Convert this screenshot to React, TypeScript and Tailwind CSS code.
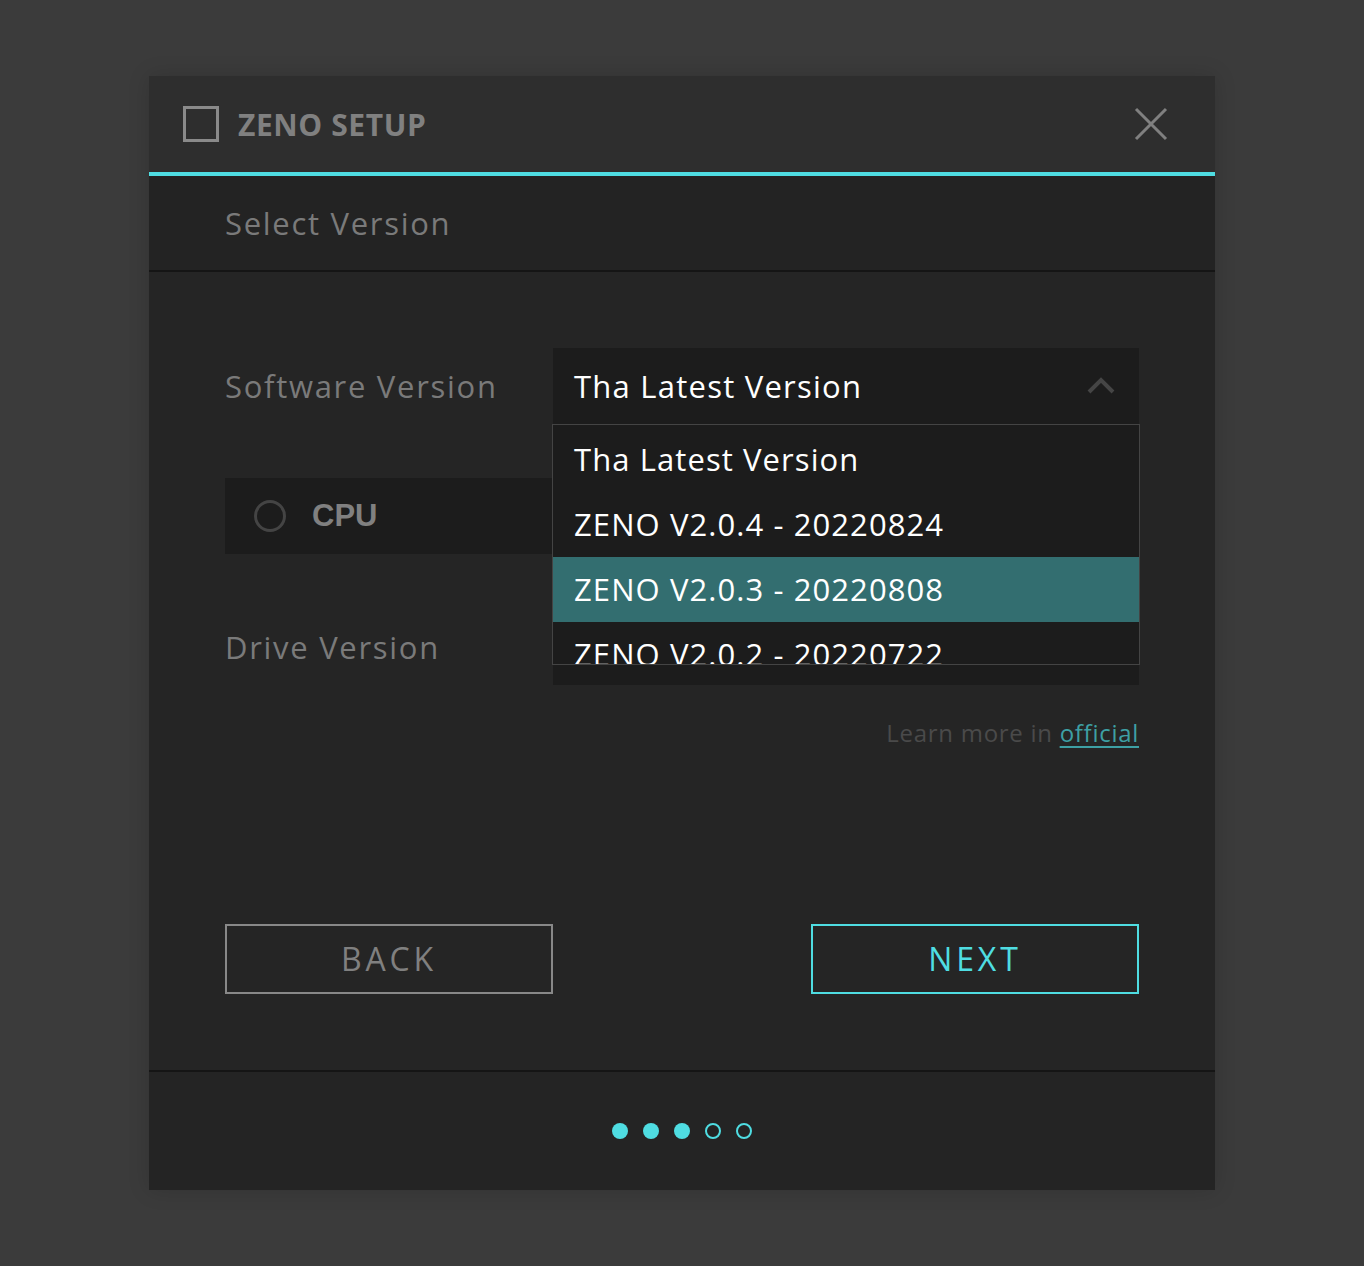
import React from "react";

const versions = [
  "Tha Latest Version",
  "ZENO V2.0.4 - 20220824",
  "ZENO V2.0.3 - 20220808",
  "ZENO V2.0.2 - 20220722",
];

const font = { fontFamily: '"Open Sans", "Noto Sans", sans-serif' };

function ChevronUp() {
  return (
    <svg width="28" height="18" viewBox="0 0 28 18" fill="none">
      <polyline points="2,15 14,3 26,15" stroke="#454545" strokeWidth="4" />
    </svg>
  );
}

function CloseIcon() {
  return (
    <svg width="34" height="34" viewBox="0 0 34 34" fill="none">
      <path d="M2 2 L32 32 M32 2 L2 32" stroke="#808080" strokeWidth="3" />
    </svg>
  );
}

export default function App() {
  const selected = 2;

  return (
    <div className="min-h-[1266px] w-full bg-[#3b3b3b] pt-[76px] pl-[149px]" style={font}>
      <div className="w-[1066px] bg-[#252525] shadow-[0_0_20px_rgba(0,0,0,0.15)]">
        {/* title bar */}
        <div className="h-[100px] bg-[#2e2e2e] border-b-4 border-[#4fdde2] flex items-center pl-[34px] pr-[47px]">
          <div className="w-[36px] h-[36px] border-[3px] border-[#8a8a8a]" />
          <div className="ml-[19px] text-[30px] font-bold text-[#808080] tracking-[0.02em]">ZENO SETUP</div>
          <div className="ml-auto">
            <CloseIcon />
          </div>
        </div>

        {/* step title */}
        <div className="h-[96px] bg-[#232323] border-b-2 border-[#151515] flex items-center pl-[76px]">
          <span className="text-[31px] text-[#7a7a7a] tracking-[0.055em]">Select Version</span>
        </div>

        {/* body */}
        <div className="px-[76px] pt-[76px] pb-[76px]">
          <div className="flex items-center h-[76px]">
            <div className="w-[328px] text-[31px] text-[#7a7a7a] tracking-[0.055em]">Software Version</div>
            <div className="relative flex-1 h-full z-10">
              <div className="h-full bg-[#1c1c1c] flex items-center pl-[21px] pr-[24px]">
                <span className="text-[31px] text-white tracking-[0.04em]">{versions[0]}</span>
                <div className="ml-auto">
                  <ChevronUp />
                </div>
              </div>
              <div className="absolute top-full -left-px -right-px h-[241px] border border-[#444] bg-[#1c1c1c] overflow-hidden pt-[2px]">
                {versions.map((v, i) => (
                  <div
                    key={v}
                    className={
                      "h-[65px] flex items-center pl-[21px] text-[31px] text-white tracking-[0.035em] " +
                      (i === selected ? "bg-[#336e70]" : "")
                    }
                  >
                    {v}
                  </div>
                ))}
              </div>
            </div>
          </div>

          <div className="mt-[54px] flex gap-[34px] h-[76px]">
            <div className="w-[327px] bg-[#1c1c1c] flex items-center pl-[29px]">
              <div className="w-[32px] h-[32px] rounded-full border-[3px] border-[#444]" />
              <span
                className="ml-[26px] text-[31px] font-bold text-[#808080]"
                style={{ fontFamily: '"Liberation Sans", Arial, sans-serif' }}
              >
                CPU
              </span>
            </div>
            <div className="flex-1 bg-[#1c1c1c]" />
          </div>

          <div className="mt-[55px] flex items-center h-[76px]">
            <div className="w-[328px] text-[31px] text-[#7a7a7a] tracking-[0.055em]">Drive Version</div>
            <div className="flex-1 h-full bg-[#1c1c1c]" />
          </div>

          <div className="mt-[30px] text-right text-[24px] tracking-[0.03em]">
            <span className="text-[#4a4a4a]">Learn more in </span>
            <span className="text-[#3ea0a4] underline underline-offset-4 decoration-2">official</span>
          </div>

          <div className="mt-[173px] flex justify-between">
            <button className="w-[328px] h-[70px] border-2 border-[#888] text-[32px] text-[#808080] tracking-[0.12em]">
              BACK
            </button>
            <button className="w-[328px] h-[70px] border-2 border-[#4fdde2] text-[32px] text-[#4fdde2] tracking-[0.12em]">
              NEXT
            </button>
          </div>
        </div>

        {/* pager */}
        <div className="h-[120px] bg-[#242424] border-t-2 border-[#151515] flex items-center justify-center gap-[15px]">
          {[0, 1, 2, 3, 4].map((i) => (
            <div
              key={i}
              className={
                "w-[16px] h-[16px] rounded-full " +
                (i < 3 ? "bg-[#4fdde2]" : "border-2 border-[#4fdde2]")
              }
            />
          ))}
        </div>
      </div>
    </div>
  );
}
